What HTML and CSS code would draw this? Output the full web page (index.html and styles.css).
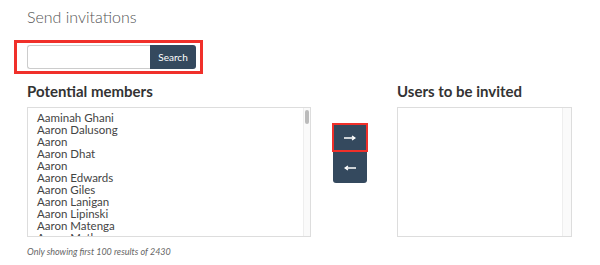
FILE: index.html
```html
<!DOCTYPE html>
<html lang="en">
<head>
    <meta charset="UTF-8">
    <meta name="viewport" content="width=device-width, initial-scale=1.0">
    <title>Send invitations</title>
    <link rel="stylesheet" href="styles.css">
</head>
<body>
    <div class="container">
        <h3 class="title">Send invitations</h3>

        <div class="search-wrap">
            <div class="search">
                <input type="text" id="query">
                <button class="btn">Search</button>
            </div>
        </div>

        <div class="picker">
            <div class="column">
                <h4>Potential members</h4>
                <div class="listbox">
                    <ul class="items">
                        <li>Aaminah Ghani</li>
                        <li>Aaron Dalusong</li>
                        <li>Aaron</li>
                        <li>Aaron Dhat</li>
                        <li>Aaron</li>
                        <li>Aaron Edwards</li>
                        <li>Aaron Giles</li>
                        <li>Aaron Lanigan</li>
                        <li>Aaron Lipinski</li>
                        <li>Aaron Matenga</li>
                        <li>Aaron Mathers</li>
                    </ul>
                    <div class="scrollbar"><div class="thumb"></div></div>
                </div>
                <p class="note">Only showing first 100 results of 2430</p>
            </div>

            <div class="moves">
                <button class="btn move active">
                    <svg width="12" height="6" viewBox="0 0 12 6"><path d="M0 3H10M8 1L11 3L8 5" stroke="#fff" stroke-width="1.3" fill="none"/></svg>
                </button>
                <button class="btn move">
                    <svg width="12" height="6" viewBox="0 0 12 6"><path d="M12 3H2M4 1L1 3L4 5" stroke="#fff" stroke-width="1.3" fill="none"/></svg>
                </button>
            </div>

            <div class="column right">
                <h4>Users to be invited</h4>
                <div class="listbox">
                    <ul class="items"></ul>
                    <div class="scrollbar empty"></div>
                </div>
            </div>
        </div>
    </div>
</body>
</html>
```

FILE: styles.css
```css
* {
    padding: 0;
    margin: 0;
    box-sizing: border-box;
    font-family: Lato, "Open Sans", sans-serif;
}
body {
    background: #fff;
    color: #444;
}
.container {
    padding: 8px 0 0 27px;
}
.title {
    font-size: 16px;
    font-weight: 300;
    color: #555;
    line-height: 18px;
}
.search-wrap {
    margin: 14px 0 0 -13px;
    width: 189px;
    border: 3px solid #f0302a;
    padding: 2px 4px 2px 10px;
}
.search {
    display: flex;
    height: 24px;
}
.search input {
    flex: 1;
    min-width: 0;
    width: 0;
    border: 1px solid #ccc;
    border-right: none;
    border-radius: 3px 0 0 3px;
    outline: none;
}
.btn {
    background: #34495e;
    color: #fff;
    border: none;
    cursor: pointer;
}
.search .btn {
    width: 46px;
    font-size: 10px;
    border-radius: 0 3px 3px 0;
}
.picker {
    display: flex;
    margin-top: 8px;
}
.column h4 {
    font-size: 15px;
    font-weight: 700;
    color: #333;
    line-height: 18px;
    margin-bottom: 7px;
}
.listbox {
    display: flex;
    width: 284px;
    height: 130px;
    border: 1px solid #ddd;
    overflow: hidden;
}
.items {
    flex: 1;
    list-style: none;
    padding: 4px 0 0 9px;
}
.items li {
    font-size: 11.5px;
    line-height: 12px;
    color: #444;
}
.scrollbar {
    width: 7px;
    border-left: 1px solid #eee;
    background: #fafafa;
    padding: 2px 1px;
}
.thumb {
    height: 14px;
    background: #bbb;
    border-radius: 3px;
}
.scrollbar.empty {
    width: 9px;
}
.note {
    font-size: 9px;
    font-style: italic;
    color: #666;
    margin-top: 9px;
}
.moves {
    display: flex;
    flex-direction: column;
    align-items: flex-start;
    width: 86px;
    padding: 41px 0 0 21px;
}
.move {
    display: flex;
    align-items: center;
    justify-content: center;
    width: 34px;
    height: 31px;
    margin-left: 1px;
    border-radius: 0 0 3px 3px;
}
.move.active {
    border: 2px solid #f0302a;
    width: 36px;
    height: 29px;
    margin-left: 0;
    border-radius: 0;
}
.right .listbox {
    width: 175px;
}
```
